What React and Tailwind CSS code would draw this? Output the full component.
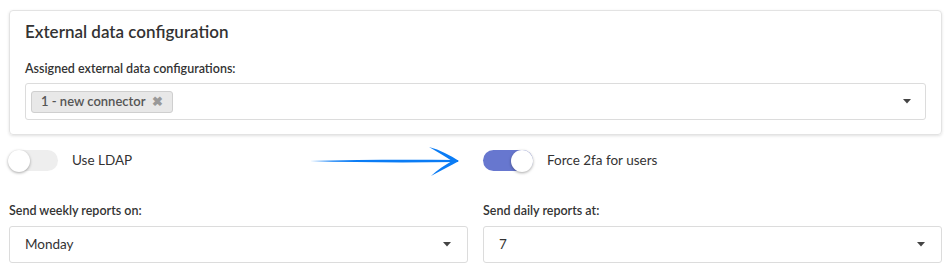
import React, { useState } from 'react';

const Caret = () => (
  <svg width="8" height="5" viewBox="0 0 8 5" className="shrink-0">
    <path d="M0 0h8L4 4.5z" fill="#444" />
  </svg>
);

const Toggle = ({ on, onChange, label }) => (
  <div className="flex items-center gap-[14px]">
    <button
      onClick={() => onChange(!on)}
      className={`relative h-[21px] w-[50px] rounded-full ${on ? 'bg-[#6777cf]' : 'bg-[#eeeeee]'}`}
    >
      <span
        className={`absolute -top-[0.5px] h-[22px] w-[22px] rounded-full bg-white shadow-[0_1px_3px_rgba(0,0,0,0.35)] ${on ? 'left-[28px]' : 'left-0'}`}
      />
    </button>
    <span className="text-[13.5px] text-[#333]">{label}</span>
  </div>
);

const Arrow = () => (
  <svg width="152" height="32" viewBox="0 0 152 32" className="absolute left-[308px] top-[145px]">
    {/* hand drawn stroke, tapered at the tail */}
    <path d="M2 16 C50 14.6 100 14.4 150 15 L150 17 C100 17.8 50 17.6 2 16z" fill="#0a7cf5" />
    <path d="M121 2 C132 5 142 10 151 16 C142 21 132 26 123 31 C129 25 137 20 144 16 C137 11 129 7 121 2z" fill="#0a7cf5" />
  </svg>
);

const Select = ({ value }) => (
  <div className="flex h-[37px] items-center justify-between rounded-[3px] border border-[#dcdcdc] bg-white pl-[15px] pr-[16px] text-[13.5px] text-[#333]">
    <span>{value}</span>
    <Caret />
  </div>
);

export default function App() {
  const [ldap, setLdap] = useState(false);
  const [force2fa, setForce2fa] = useState(true);

  return (
    <div className="relative h-[271px] w-[950px] bg-white pl-[9px] pr-[8px] pt-[10px] font-['Lato',sans-serif] text-[#333]">
      {/* External data card */}
      <div className="rounded-[4px] border border-[#e3e3e3] px-[15px] pb-[14px] pt-[9px] shadow-[0_1px_3px_rgba(0,0,0,0.12)]">
        <h2 className="text-[17px] font-semibold leading-[24px]">External data configuration</h2>
        <div className="mt-[16px] text-[12.5px] font-semibold leading-[18px]">Assigned external data configurations:</div>
        <div className="mt-[5px] flex h-[37px] items-center justify-between rounded-[3px] border border-[#dcdcdc] pl-[5px] pr-[14px]">
          <span className="flex h-[22px] items-center gap-[7px] rounded-[3px] border border-[#cfcfcf] bg-[#e8e8e8] px-[9px] text-[13px] font-semibold text-[#555]">
            1 - new connector
            <span className="text-[13px] leading-none text-[#999]">✖</span>
          </span>
          <Caret />
        </div>
      </div>

      {/* toggles */}
      <div className="mt-[15px] grid grid-cols-2 gap-[15px]">
        <div className="-ml-[1px]">
          <Toggle on={ldap} onChange={setLdap} label="Use LDAP" />
        </div>
        <Toggle on={force2fa} onChange={setForce2fa} label="Force 2fa for users" />
      </div>
      <Arrow />

      {/* report settings */}
      <div className="mt-[31px] grid grid-cols-2 gap-[15px]">
        <div>
          <div className="mb-[6px] text-[12.5px] font-semibold leading-[18px]">Send weekly reports on:</div>
          <Select value="Monday" />
        </div>
        <div>
          <div className="mb-[6px] text-[12.5px] font-semibold leading-[18px]">Send daily reports at:</div>
          <Select value="7" />
        </div>
      </div>
    </div>
  );
}
